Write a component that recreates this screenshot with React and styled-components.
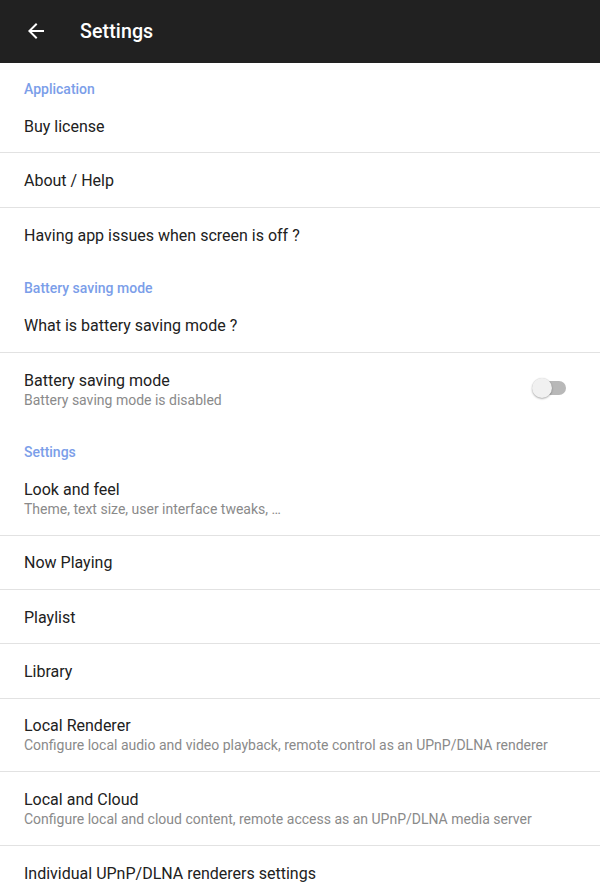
import React from "react";
import styled, { createGlobalStyle } from "styled-components";

const Global = createGlobalStyle`
  html, body { margin: 0; padding: 0; background: #ffffff; }
  body { font-family: Roboto, "Noto Sans", Arial, sans-serif; -webkit-font-smoothing: antialiased; }
  * { box-sizing: border-box; }
`;

const Page = styled.div`
  width: 600px;
  height: 888px;
  overflow: hidden;
  background: #fff;
  display: flex;
  flex-direction: column;
`;

const Toolbar = styled.header`
  height: 63px;
  flex: none;
  background: #212121;
  display: flex;
  align-items: center;
  padding-left: 24px;
  color: #fff;
`;

const BackButton = styled.div`
  width: 24px;
  height: 24px;
  margin-top: -1px;
  display: flex;
`;

const Title = styled.h1`
  margin: 1px 0 0 32px;
  font-size: 19.6px;
  font-weight: 500;
  letter-spacing: 0.1px;
  line-height: 24px;
`;

const List = styled.div`
  display: flex;
  flex-direction: column;
`;

const Category = styled.div`
  height: 36px;
  flex: none;
  padding: 16px 24px 0;
  font-size: 14px;
  font-weight: 500;
  line-height: 20px;
  color: #7b9ee9;
`;

const Row = styled.div`
  display: flex;
  flex: none;
  align-items: center;
  padding: 0 34px 0 24px;
  height: ${(p) => (p.$two ? "73.5px" : "54.4px")};
  border-bottom: ${(p) => (p.$divider ? "1px solid #e2e2e2" : "none")};
`;

const Texts = styled.div`
  flex: 1;
  display: flex;
  flex-direction: column;
  padding-top: ${(p) => (p.$two ? "2px" : "2px")};
`;

const ItemTitle = styled.div`
  font-size: 16px;
  line-height: 20px;
  color: #212121;
`;

const Summary = styled.div`
  font-size: 14px;
  line-height: 19px;
  color: #8a8a8a;
`;

const SwitchTrack = styled.div`
  position: relative;
  width: 31px;
  height: 14px;
  border-radius: 7px;
  background: #b8b8b8;
  margin-top: -2px;
`;

const SwitchThumb = styled.div`
  position: absolute;
  left: -3px;
  top: -3px;
  width: 20px;
  height: 20px;
  border-radius: 50%;
  background: #f1f1f1;
  box-shadow: 0 1px 2px rgba(0, 0, 0, 0.3), 0 0 1px rgba(0, 0, 0, 0.15);
`;

const Switch = () => (
  <SwitchTrack>
    <SwitchThumb />
  </SwitchTrack>
);

const sections = [
  {
    name: "Application",
    items: [
      { title: "Buy license" },
      { title: "About / Help" },
      { title: "Having app issues when screen is off ?" },
    ],
  },
  {
    name: "Battery saving mode",
    items: [
      { title: "What is battery saving mode ?" },
      {
        title: "Battery saving mode",
        summary: "Battery saving mode is disabled",
        toggle: true,
      },
    ],
  },
  {
    name: "Settings",
    items: [
      { title: "Look and feel", summary: "Theme, text size, user interface tweaks, …" },
      { title: "Now Playing" },
      { title: "Playlist" },
      { title: "Library" },
      {
        title: "Local Renderer",
        summary:
          "Configure local audio and video playback, remote control as an UPnP/DLNA renderer",
      },
      {
        title: "Local and Cloud",
        summary:
          "Configure local and cloud content, remote access as an UPnP/DLNA media server",
      },
      { title: "Individual UPnP/DLNA renderers settings" },
    ],
  },
];

export default function App() {
  return (
    <>
      <Global />
      <Page>
        <Toolbar>
          <BackButton>
            <svg width="24" height="24" viewBox="0 0 24 24" fill="#fff">
              <path d="M20 11H7.83l5.59-5.59L12 4l-8 8 8 8 1.41-1.41L7.83 13H20v-2z" />
            </svg>
          </BackButton>
          <Title>Settings</Title>
        </Toolbar>
        <List>
          {sections.map((s) => (
            <React.Fragment key={s.name}>
              <Category>{s.name}</Category>
              {s.items.map((it, i) => {
                const last = i === s.items.length - 1;
                const two = !!it.summary;
                return (
                  <Row key={it.title + i} $two={two} $divider={!last}>
                    <Texts $two={two}>
                      <ItemTitle>{it.title}</ItemTitle>
                      {it.summary && <Summary>{it.summary}</Summary>}
                    </Texts>
                    {it.toggle && <Switch />}
                  </Row>
                );
              })}
            </React.Fragment>
          ))}
        </List>
      </Page>
    </>
  );
}
